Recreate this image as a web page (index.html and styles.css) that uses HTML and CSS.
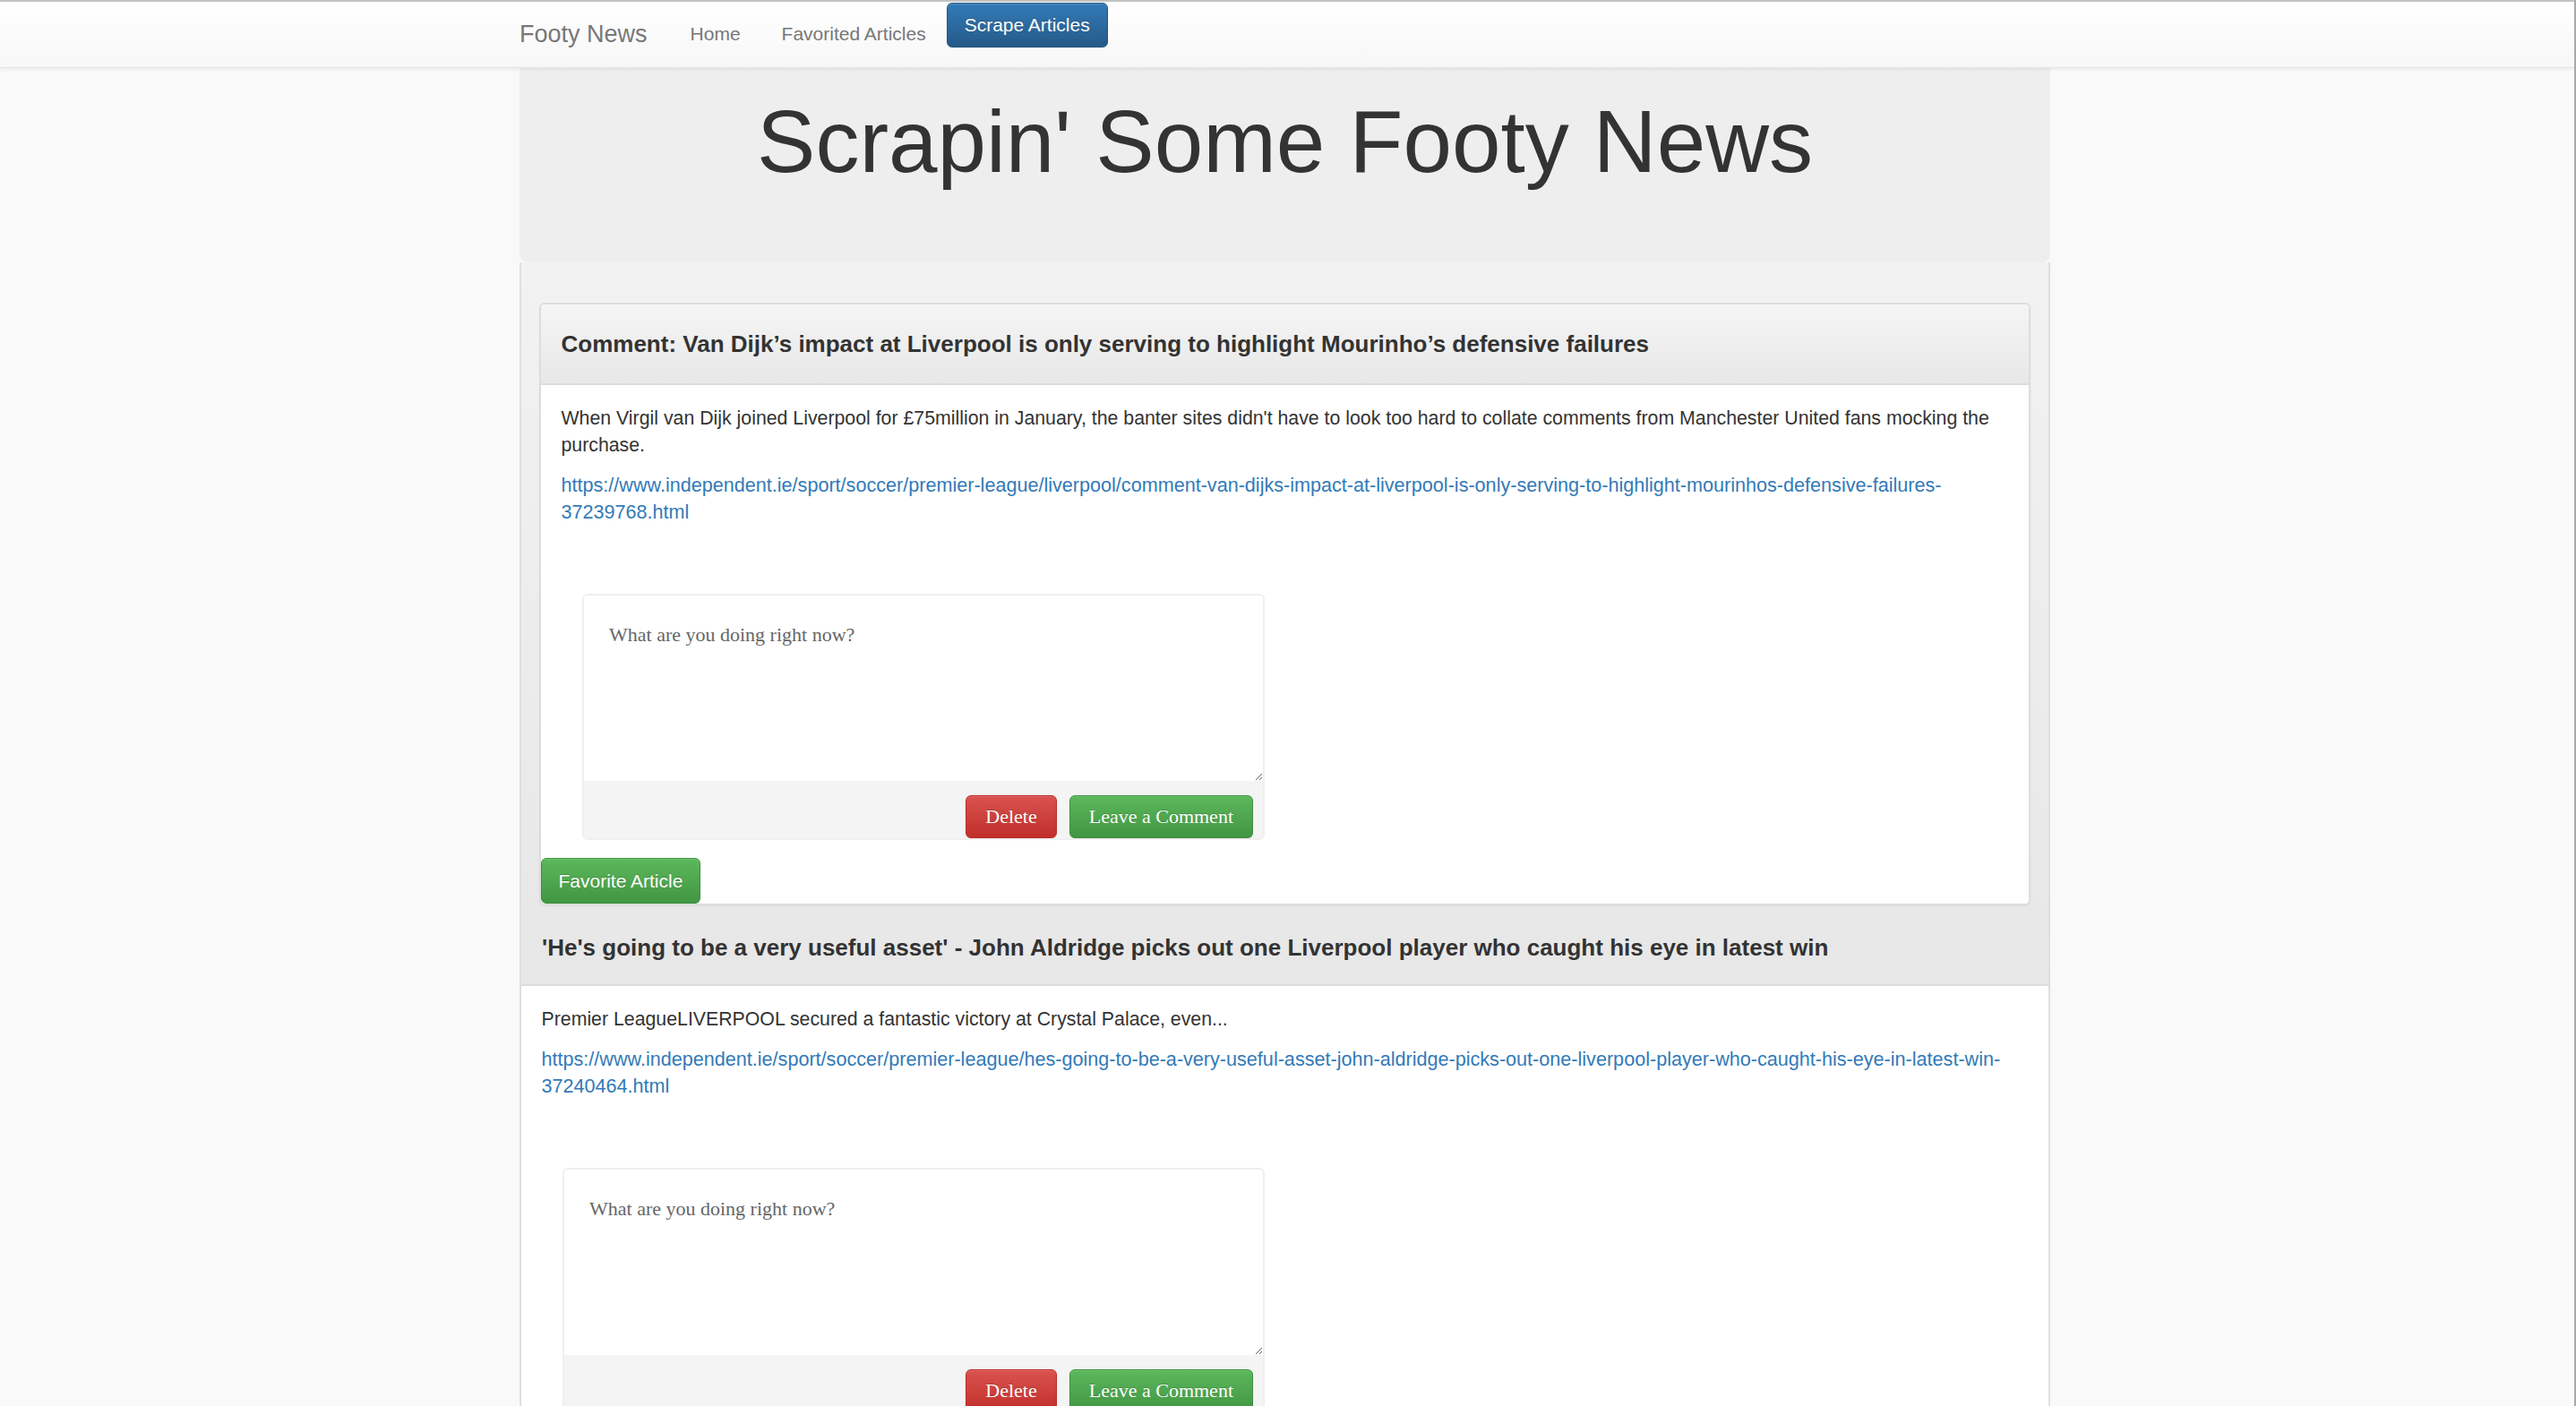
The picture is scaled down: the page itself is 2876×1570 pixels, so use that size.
FILE: index.html
```html
<!DOCTYPE html>
<html lang="en">
<head>
<meta charset="utf-8">
<title>Footy News</title>
<link rel="stylesheet" href="styles.css">
</head>
<body>
<nav class="navbar">
  <div class="container nav-inner">
    <a class="brand" href="#">Footy News</a>
    <ul class="nav-links">
      <li><a href="#">Home</a></li>
      <li><a href="#">Favorited Articles</a></li>
      <li><button class="btn btn-primary btn-scrape">Scrape Articles</button></li>
    </ul>
  </div>
</nav>
<div class="page">
  <main class="container">
    <div class="jumbotron">
      <h1>Scrapin' Some Footy News</h1>
    </div>
    <div class="outer">
      <div class="outer-heading">
        <div class="article">
          <div class="article-heading">
            <h3 class="panel-title">Comment: Van Dijk’s impact at Liverpool is only serving to highlight Mourinho’s defensive failures</h3>
          </div>
          <div class="panel-body">
            <p>When Virgil van Dijk joined Liverpool for £75million in January, the banter sites didn't have to look too hard to collate comments from Manchester United fans mocking the purchase.</p>
            <p><a class="link" href="#">https://www.independent.ie/sport/soccer/premier-league/liverpool/comment-van-dijks-impact-at-liverpool-is-only-serving-to-highlight-mourinhos-defensive-failures-<wbr>37239768.html</a></p>
            <div class="row">
              <div class="col-half">
                <div class="comment-box">
                  <textarea class="comment-input" placeholder="What are you doing right now?"></textarea>
                  <div class="comment-footer">
                    <button class="btn btn-serif btn-danger">Delete</button>
                    <button class="btn btn-serif btn-success">Leave a Comment</button>
                  </div>
                </div>
              </div>
            </div>
          </div>
          <button class="btn btn-success btn-fav">Favorite Article</button>
        </div>
        <h3 class="panel-title title-second">'He's going to be a very useful asset' - John Aldridge picks out one Liverpool player who caught his eye in latest win</h3>
      </div>
      <div class="panel-body outer-body">
        <p>Premier LeagueLIVERPOOL secured a fantastic victory at Crystal Palace, even...</p>
        <p><a class="link" href="#">https://www.independent.ie/sport/soccer/premier-league/hes-going-to-be-a-very-useful-asset-john-aldridge-picks-out-one-liverpool-player-who-caught-his-eye-in-latest-win-<wbr>37240464.html</a></p>
        <div class="row">
          <div class="col-half">
            <div class="comment-box">
              <textarea class="comment-input" placeholder="What are you doing right now?"></textarea>
              <div class="comment-footer">
                <button class="btn btn-serif btn-danger">Delete</button>
                <button class="btn btn-serif btn-success">Leave a Comment</button>
              </div>
            </div>
          </div>
        </div>
      </div>
      <button class="btn btn-success btn-fav">Favorite Article</button>
    </div>
  </main>
</div>
</body>
</html>
```

FILE: styles.css
```css
html {
  border-right: 2px solid #a9a9a9;
}

body {
  margin: 0;
  background: #f9f9f9;
  font-family: "Liberation Sans", Arial, Helvetica, sans-serif;
  font-size: 21px;
  line-height: 30px;
  color: #333;
}

.container {
  width: 1709px;
  margin: 0 auto;
}

/* Navbar */
.navbar {
  border-top: 2px solid #c2c2c2;
  border-bottom: 1px solid #e4e4e4;
  height: 73px;
  padding-right: 5px;
  background: linear-gradient(#ffffff, #f7f7f7);
  box-shadow: 0 1px 5px rgba(0, 0, 0, 0.075);
  position: relative;
  z-index: 2;
}

.nav-inner {
  display: flex;
  align-items: flex-start;
}

.brand {
  display: block;
  font-size: 27px;
  line-height: 30px;
  color: #777;
  text-decoration: none;
  padding: 21px 25px 0 0;
}

.nav-links {
  display: flex;
  align-items: flex-start;
  list-style: none;
  margin: 0;
  padding: 0;
}

.nav-links a {
  display: block;
  padding: 21px 23px 0;
  color: #777;
  text-decoration: none;
}

/* Buttons */
.btn {
  display: inline-block;
  margin: 0;
  font-family: "Liberation Sans", Arial, Helvetica, sans-serif;
  font-size: 21px;
  line-height: 30px;
  padding: 9px 18px;
  border: 1px solid transparent;
  border-radius: 6px;
  color: #fff;
  text-shadow: 0 -1px 0 rgba(0, 0, 0, 0.2);
  box-shadow: inset 0 1px 0 rgba(255, 255, 255, 0.15), 0 1px 1px rgba(0, 0, 0, 0.075);
  cursor: pointer;
}

.btn-primary {
  background: linear-gradient(#337ab7, #265a88);
  border-color: #245580;
}

.btn-success {
  background: linear-gradient(#5cb85c, #419641);
  border-color: #3e8f3e;
}

.btn-danger {
  background: linear-gradient(#d9534f, #c12e2a);
  border-color: #b92c28;
}

.btn-scrape {
  margin-top: 1px;
  padding: 9px 19px;
}

.btn-serif {
  font-family: "Liberation Serif", "Times New Roman", serif;
  font-size: 22px;
  padding: 8px 21px;
}

.btn-fav {
  display: block;
  padding: 9.5px 18.5px;
}

/* Jumbotron */
.page {
  padding-right: 5px;
}

.jumbotron {
  background: #eeeeee;
  border-radius: 0 0 9px 9px;
  padding: 28px 0 81px;
  position: relative;
  z-index: 1;
}

.jumbotron h1 {
  margin: 0;
  font-size: 98px;
  line-height: 108px;
  font-weight: normal;
  text-align: center;
  color: #333;
}

/* Outer panel */
.outer {
  border: 2px solid #dfdfdf;
  border-top: none;
  background: #fff;
}

.outer-heading {
  background: linear-gradient(#f2f2f2, #e7e7e7);
  padding: 45px 20px 0;
  border-bottom: 2px solid #dddddd;
}

.panel-title {
  margin: 0;
  font-size: 26px;
  line-height: 26px;
  font-weight: bold;
  color: #333;
}

.title-second {
  padding: 34px 0 28px 3px;
}

/* Article panel */
.article {
  border: 2px solid #dddddd;
  border-radius: 6px;
  background: #fff;
  box-shadow: 0 1px 2px rgba(0, 0, 0, 0.05);
  overflow: hidden;
}

.article-heading {
  background: linear-gradient(#f5f5f5, #e8e8e8);
  padding: 31px 22.5px 31px;
  border-bottom: 2px solid #dddddd;
}

.panel-body {
  padding: 22px 22.5px 20px;
}

.panel-body p {
  margin: 0 0 15px;
  font-size: 21.3px;
}

.link {
  color: #337ab7;
  text-decoration: none;
  font-size: 21.6px;
}

/* Comment area */
.row {
  display: flex;
  margin: 76px -22.5px 0;
}

.col-half {
  width: 50%;
  padding: 0 22.5px;
  box-sizing: border-box;
}

.comment-box {
  margin-left: 23.5px;
  border: 2px solid #efefef;
  border-radius: 6px;
  overflow: hidden;
  background: #fff;
}

.comment-input {
  display: block;
  width: 100%;
  height: 207px;
  box-sizing: border-box;
  border: none;
  outline: none;
  margin: 0;
  padding: 29px 28px;
  font-family: "Liberation Serif", "Times New Roman", serif;
  font-size: 22px;
  line-height: 30px;
  color: #333;
  background: #fff;
  resize: vertical;
}

.comment-input::placeholder {
  color: #666;
}

.comment-footer {
  display: flex;
  justify-content: flex-end;
  gap: 14px;
  padding: 16px 11px 0 0;
  background: #f4f4f4;
}
```
